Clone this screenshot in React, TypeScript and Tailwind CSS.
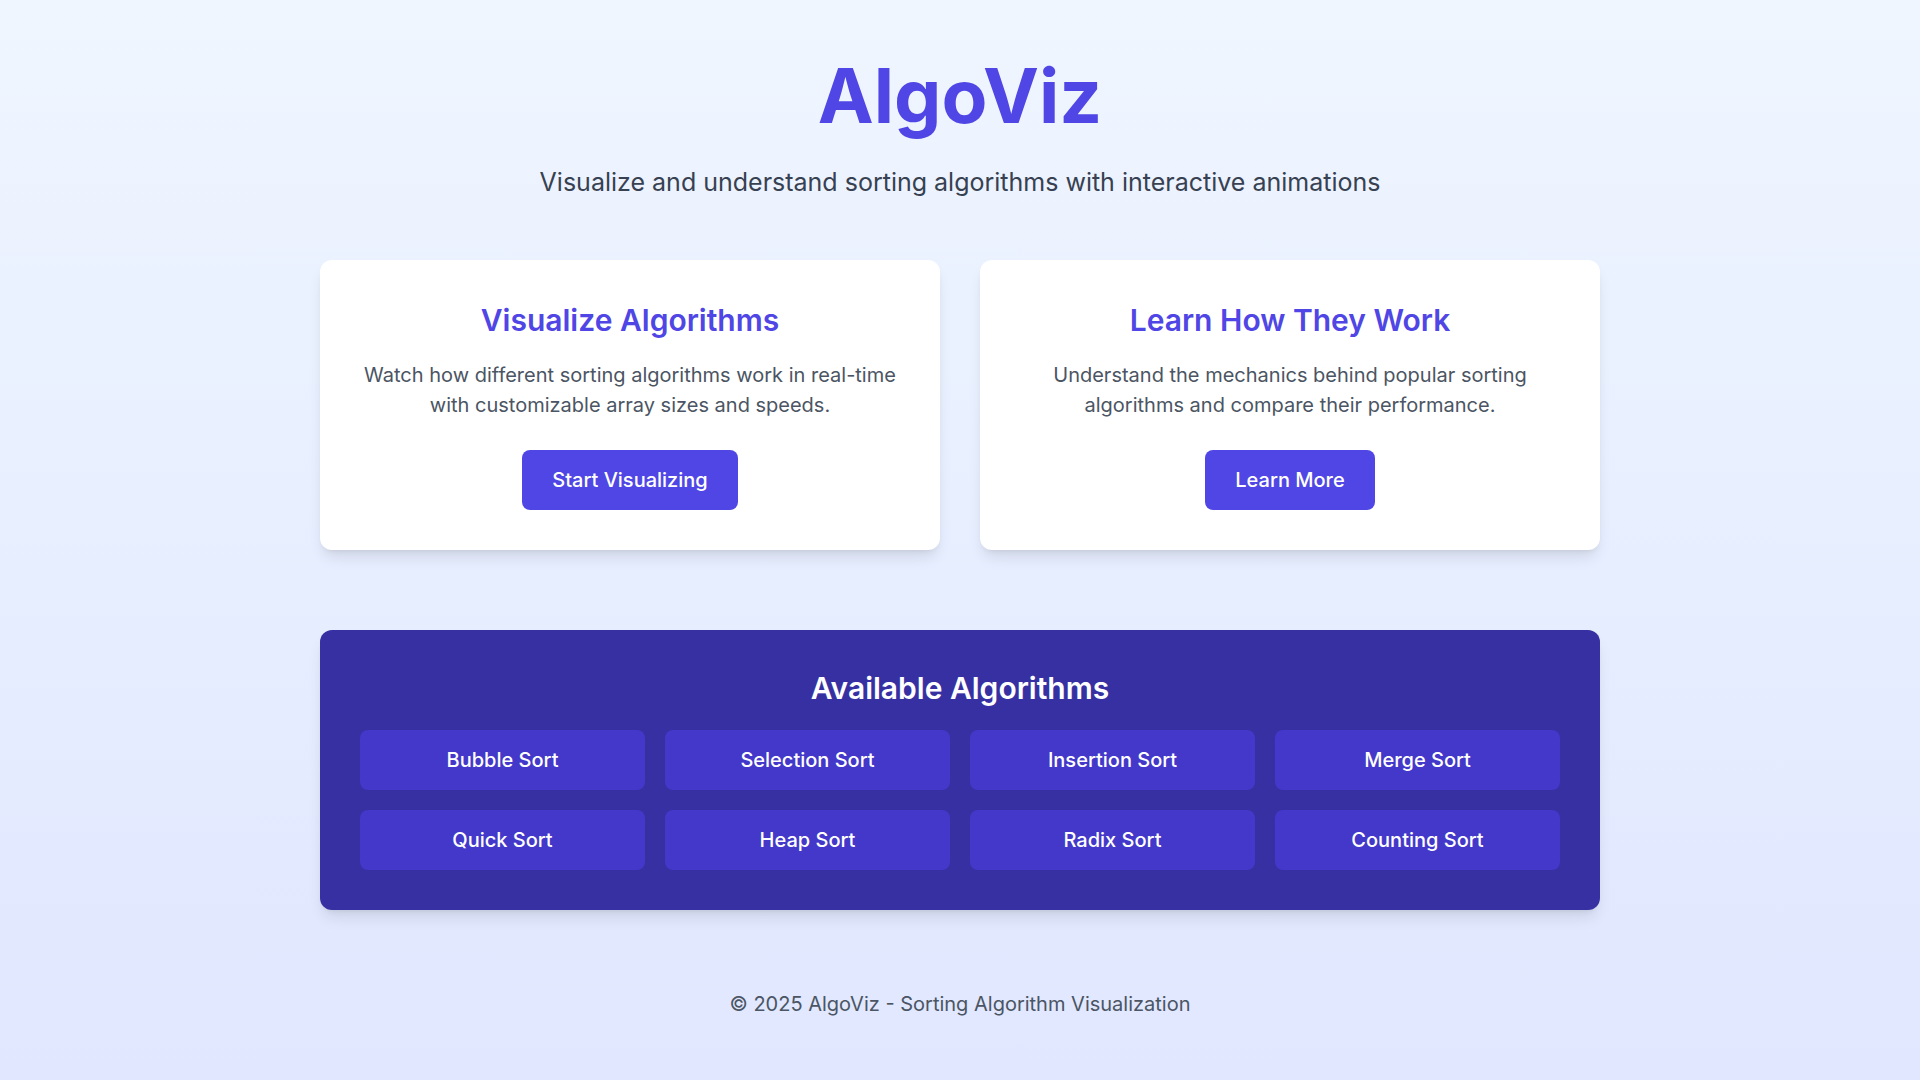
const features = [
  {
    title: "Visualize Algorithms",
    text: "Watch how different sorting algorithms work in real-time with customizable array sizes and speeds.",
    action: "Start Visualizing",
  },
  {
    title: "Learn How They Work",
    text: "Understand the mechanics behind popular sorting algorithms and compare their performance.",
    action: "Learn More",
  },
];

const algorithms = [
  "Bubble Sort",
  "Selection Sort",
  "Insertion Sort",
  "Merge Sort",
  "Quick Sort",
  "Heap Sort",
  "Radix Sort",
  "Counting Sort",
];

export default function App() {
  return (
    <div className="min-h-screen bg-gradient-to-b from-[#eff6ff] to-[#e0e7ff] font-['Inter',sans-serif]">
      <div className="max-w-7xl mx-auto pt-[58px] pb-12">
        {/* Header */}
        <header className="text-center mb-[62px]">
          <h1 className="text-[75px] leading-none font-bold text-[#4f46e5] mb-[33px]">AlgoViz</h1>
          <p className="text-[25px] leading-8 text-[#374151]">
            Visualize and understand sorting algorithms with interactive animations
          </p>
        </header>

        {/* Feature cards */}
        <div className="grid grid-cols-2 gap-10 mb-20">
          {features.map((f) => (
            <div key={f.title} className="bg-white rounded-xl shadow-lg px-10 pt-[42px] pb-10 text-center">
              <h2 className="text-3xl font-semibold text-[#4f46e5] mb-[22px]">{f.title}</h2>
              <p className="text-xl leading-normal text-[#4b5563] mb-[30px]">{f.text}</p>
              <button className="bg-[#4f46e5] text-white text-xl font-medium px-[30px] py-4 rounded-lg">
                {f.action}
              </button>
            </div>
          ))}
        </div>

        {/* Algorithm list */}
        <section className="bg-[#3730a3] rounded-xl shadow-lg p-10">
          <h2 className="text-3xl font-semibold text-white text-center mb-6">Available Algorithms</h2>
          <div className="grid grid-cols-4 gap-5">
            {algorithms.map((a) => (
              <div
                key={a}
                className="bg-[#4338ca] rounded-lg py-4 text-center text-xl font-medium text-white"
              >
                {a}
              </div>
            ))}
          </div>
        </section>

        <footer className="mt-20 text-center text-xl text-[#4b5563]">
          © 2025 AlgoViz - Sorting Algorithm Visualization
        </footer>
      </div>
    </div>
  );
}
